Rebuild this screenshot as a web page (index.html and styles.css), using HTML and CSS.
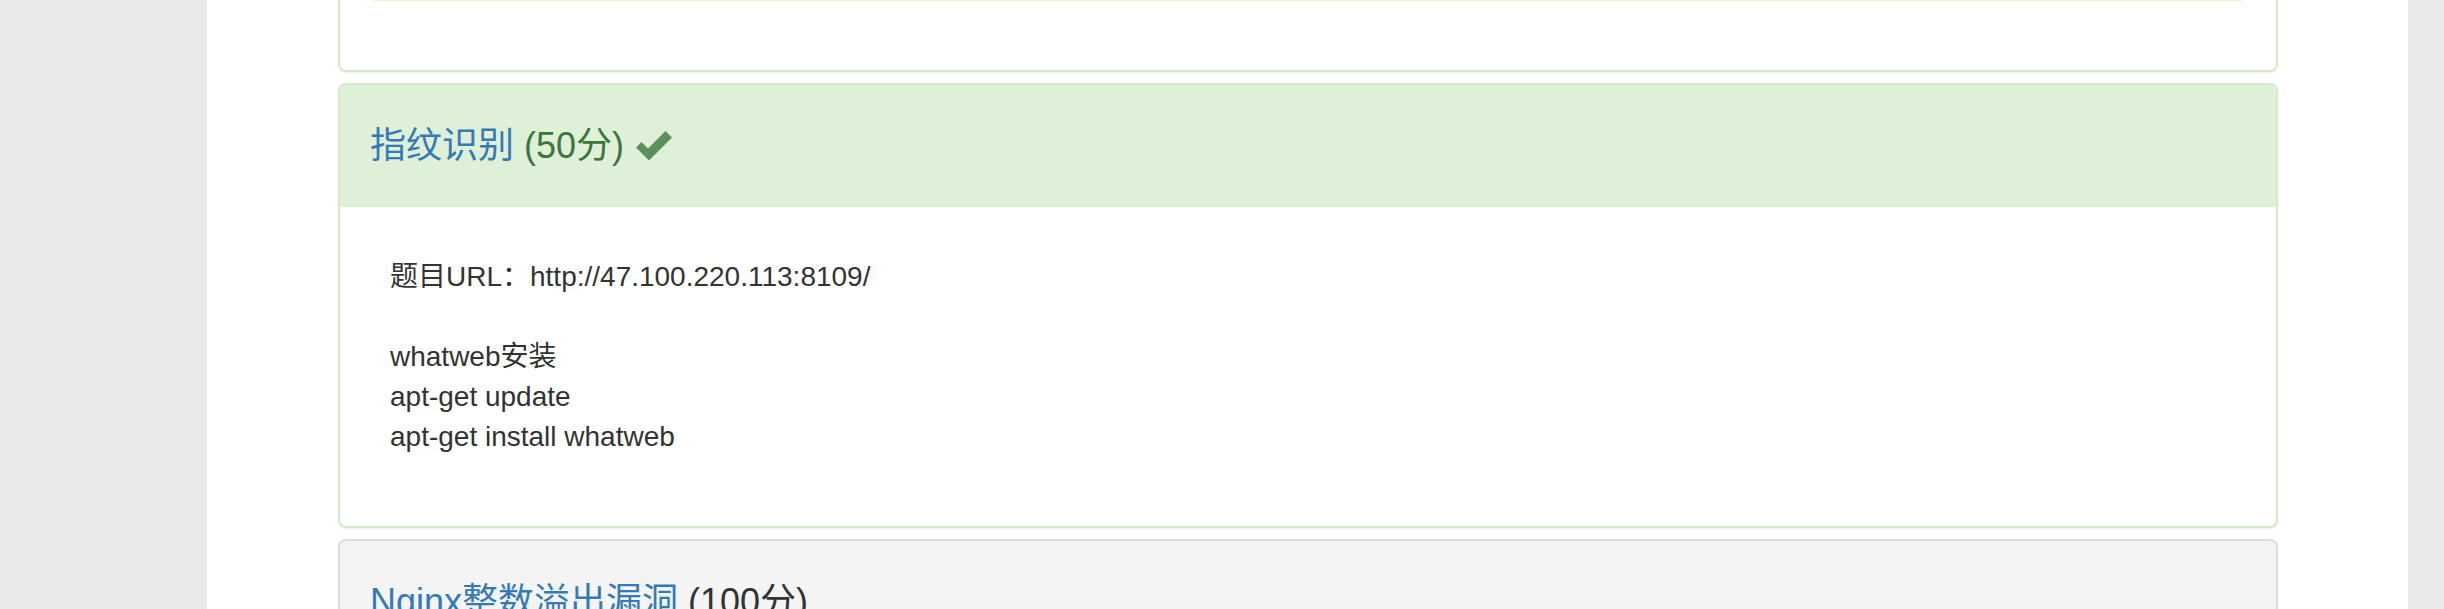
FILE: index.html
```html
<!DOCTYPE html>
<html lang="zh-CN">
<head>
<meta charset="utf-8">
<title>题目</title>
<link rel="stylesheet" href="styles.css">
</head>
<body>
<div class="page">
  <main class="container">
    <section class="panel panel-success panel-tail">
      <div class="tail-body">
        <div class="alert-tail"></div>
      </div>
    </section>

    <section class="panel panel-success">
      <div class="panel-heading">
        <h3 class="panel-title"><a class="title-link" href="#">指纹识别</a> <span class="score score-ok">(50分)</span><svg class="ok-icon" viewBox="0 0 36 30" width="36" height="30" aria-hidden="true"><path d="M0 16.5 L5.5 11 L12 17.5 L29.5 0 L36 6.5 L13 29.5 Z" fill="#5b8f5b"/></svg></h3>
      </div>
      <div class="panel-body">
        <div class="desc">题目URL：http://47.100.220.113:8109/<br><br>whatweb安装<br>apt-get update<br>apt-get install whatweb</div>
      </div>
    </section>

    <section class="panel panel-default">
      <div class="panel-heading">
        <h3 class="panel-title"><a class="title-link" href="#">Nginx整数溢出漏洞</a> <span class="score">(100分)</span></h3>
      </div>
      <div class="panel-body">
        <div class="desc">题目URL：</div>
      </div>
    </section>
  </main>
</div>
</body>
</html>
```

FILE: styles.css
```css
html, body {
  margin: 0;
  padding: 0;
}

body {
  background: #e9e9e9;
  font-family: "Liberation Sans", Arial, "Noto Sans CJK SC", sans-serif;
  color: #333;
  font-size: 28px;
  line-height: 40px;
  overflow: hidden;
  height: 609px;
}

.page {
  display: flex;
  padding: 0 36px 0 207px;
}

.container {
  flex: 1;
  background: #fff;
  padding: 0 130px 0 131px;
  display: flex;
  flex-direction: column;
  gap: 11px;
  min-height: 609px;
}

.panel {
  background: #fff;
  border: 2px solid #ddd;
  border-radius: 8px;
  box-shadow: 0 2px 2px rgba(0, 0, 0, 0.05);
}

.panel-success {
  border-color: #d6e9c6;
}

.panel-tail {
  border-top: 0;
  border-radius: 0 0 8px 8px;
}

.tail-body {
  padding: 0 30px 69px;
}

.alert-tail {
  margin: 0 4px;
  height: 0;
  border-bottom: 1px solid #faebcc;
}

.panel-heading {
  padding: 41px 30px;
  border-radius: 6px 6px 0 0;
  background: #f4f4f4;
}

.panel-success .panel-heading {
  background: #dff0d8;
}

.panel-title {
  margin: 0;
  font-size: 36px;
  line-height: 40px;
  font-weight: normal;
  white-space: nowrap;
}

.title-link {
  color: #337ab7;
  text-decoration: none;
}

.score {
  color: #333;
}

.score-ok {
  color: #3c763d;
}

.ok-icon {
  margin-left: 12px;
  vertical-align: -3px;
}

.panel-body {
  padding: 30px;
}

.desc {
  padding: 20px 20px 39px;
}
```
